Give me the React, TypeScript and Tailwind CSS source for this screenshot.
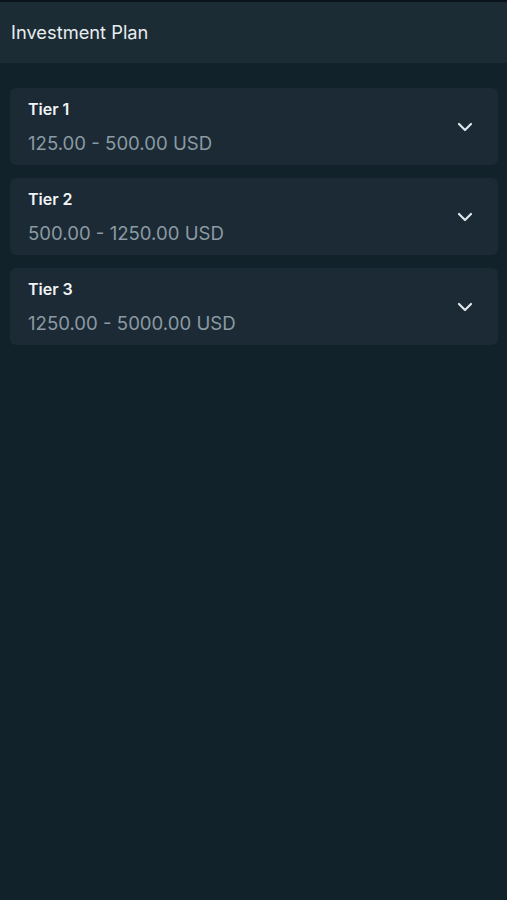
import React from 'react';

interface Tier {
  name: string;
  min: string;
  max: string;
}

const tiers: Tier[] = [
  { name: 'Tier 1', min: '125.00', max: '500.00' },
  { name: 'Tier 2', min: '500.00', max: '1250.00' },
  { name: 'Tier 3', min: '1250.00', max: '5000.00' },
];

const Chevron: React.FC = () => (
  <svg width="16" height="10" viewBox="0 0 16 10" fill="none" className="text-[#dfe6ea]">
    <path d="M2 2l6 6 6-6" stroke="currentColor" strokeWidth="2.2" strokeLinecap="round" strokeLinejoin="round" />
  </svg>
);

const TierCard: React.FC<{ tier: Tier }> = ({ tier }) => (
  <div className="flex items-center justify-between rounded-md bg-[#1b2a34] pl-[18px] pr-[25px] pt-[11px] pb-[10px]">
    <div className="flex flex-col gap-3">
      <span className="text-[16px] leading-5 font-semibold text-[#f1f4f6]">{tier.name}</span>
      <span className="text-[18.6px] leading-6 text-[#8b9aa3]">
        {tier.min} - {tier.max} USD
      </span>
    </div>
    <Chevron />
  </div>
);

export default function App() {
  return (
    <div
      className="flex h-[900px] w-full flex-col bg-[#12222b]"
      style={{ fontFamily: 'Inter, "Noto Sans", sans-serif' }}
    >
      <div className="h-[2px] bg-[#0a1319]" />
      <header className="flex h-[61px] items-center bg-[#1c2c35] px-[11px]">
        <h1 className="text-[18.3px] font-normal text-[#e8edf0]">Investment Plan</h1>
      </header>
      <main className="flex flex-1 flex-col gap-[13px] px-[10px] pt-[25px] pr-[9px]">
        {tiers.map((t) => (
          <TierCard key={t.name} tier={t} />
        ))}
      </main>
    </div>
  );
}
